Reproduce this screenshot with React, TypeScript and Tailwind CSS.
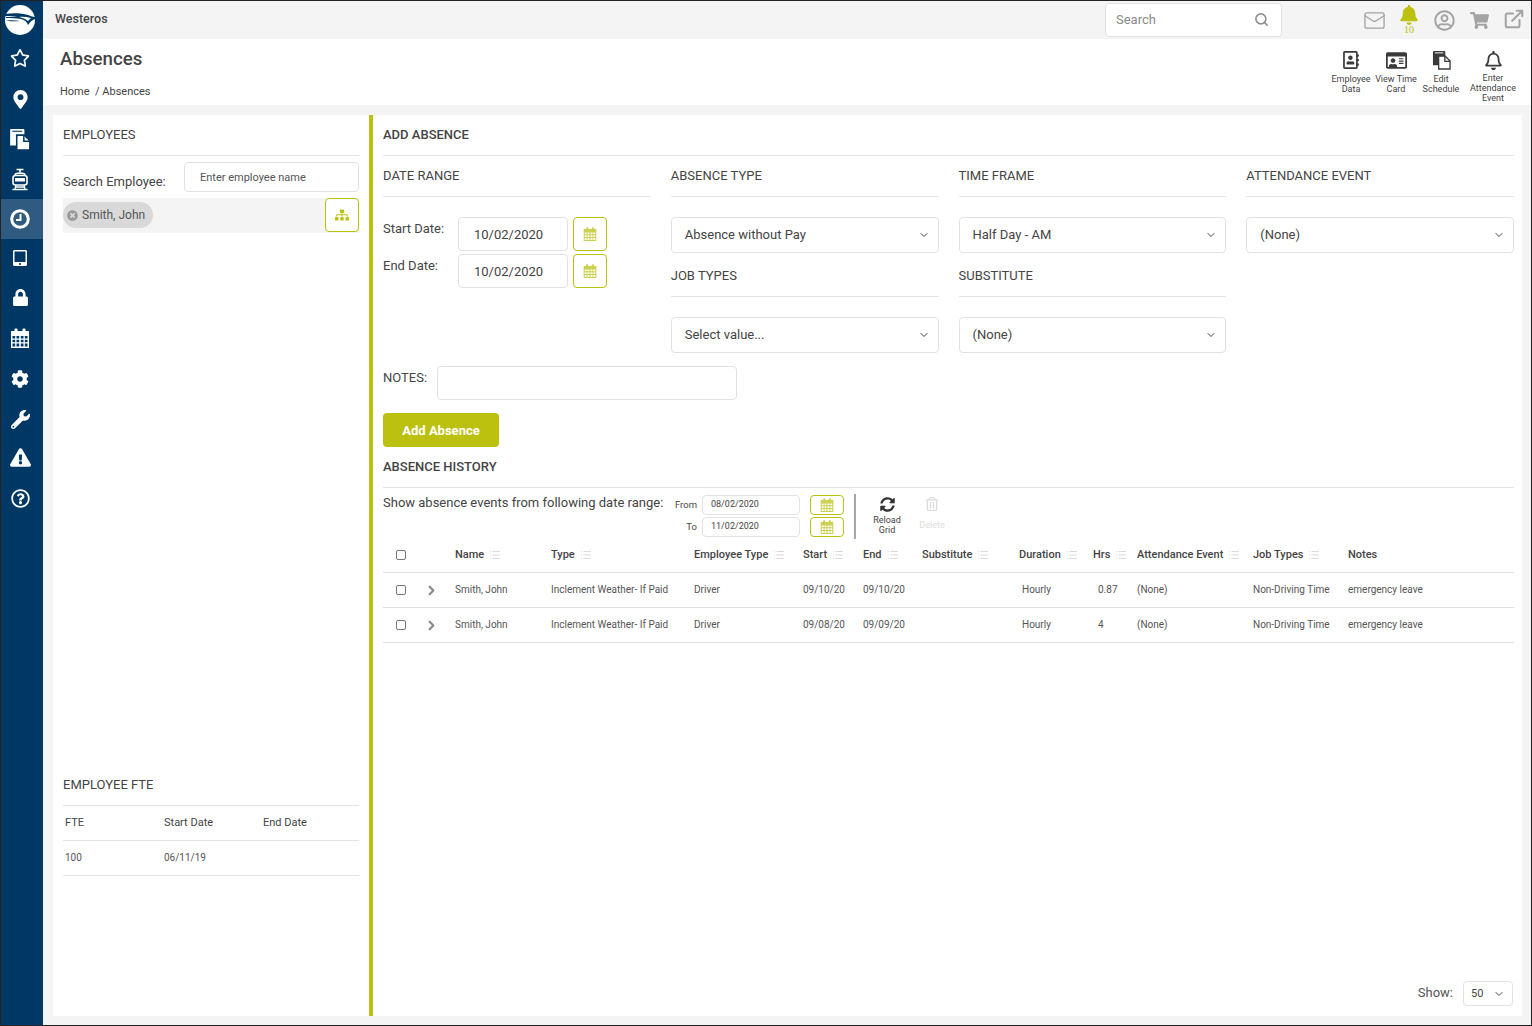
import { ChevronDown, ChevronRight, ExternalLink, List, Mail, Search } from 'lucide-react';
import {
  FaBell,
  FaCog,
  FaExclamationTriangle,
  FaLock,
  FaMapMarkerAlt,
  FaRegAddressBook,
  FaRegBell,
  FaRegIdCard,
  FaRegQuestionCircle,
  FaRegStar,
  FaRegTrashAlt,
  FaRegUserCircle,
  FaShoppingCart,
  FaSitemap,
  FaSyncAlt,
  FaTabletAlt,
  FaTimesCircle,
  FaWrench,
} from 'react-icons/fa';

function Logo() {
  return (
    <svg width="30" height="30" viewBox="0 0 30 30">
      <circle cx="15" cy="15" r="15" fill="#fff" />
      <path d="M0 9 C8 8 16 8 23 10 C26 11 28 12 30 12 L30 14 C27 15 25 17 23 20 C22 17 20 15 16 14 C11 13 6 13 1 13 L1 12 C6 12 9 12 12 12 C8 11 4 11 0 11 Z" fill="#003865" />
      <path d="M1 15.5 C6 15 11 15 15 16 C11 16.5 6 16.5 1 15.5 Z" fill="#003865" />
      <path d="M14 12 C18 13 21 14 23 16 L26 13 C22 12 18 11.5 14 12 Z" fill="#fff" />
    </svg>
  );
}

function TrainIcon() {
  return (
    <svg width="18" height="23" viewBox="0 0 18 23" fill="none" stroke="#fff">
      <path d="M5.5 1.5 H12.5 M9 1.5 V4" strokeWidth="1.6" />
      <path d="M4 7 C4 4.5 14 4.5 14 7" strokeWidth="1.6" />
      <rect x="2" y="7.5" width="14" height="9.5" rx="2.5" strokeWidth="1.6" />
      <rect x="4" y="10" width="10" height="3.5" fill="#fff" stroke="none" />
      <path d="M5 17 L4 21 M13 17 L14 21 M1.5 21.5 H16.5 M5 19 H13" strokeWidth="1.3" />
    </svg>
  );
}

function ClockIcon() {
  return (
    <svg width="20" height="20" viewBox="0 0 20 20" fill="none" stroke="#fff">
      <circle cx="10" cy="10" r="8.3" strokeWidth="3" />
      <path d="M10.5 5 V11 H6" strokeWidth="2" />
    </svg>
  );
}

function FilesIcon({ size, dark }: { size: number; dark?: boolean }) {
  return (
    <svg width={size} height={size + 1} viewBox="0 0 20 21">
      <path
        d="M1 2 C1 1.4 1.4 1 2 1 H13 C13.6 1 14 1.4 14 2 V16 H1 Z"
        fill="currentColor"
      />
      <path d="M3 3 H12" stroke={dark ? '#fff' : '#003865'} strokeWidth="1" />
      <path
        d="M7 6.5 H14 L19 11.5 V20 H7 Z"
        fill={dark ? '#fff' : 'currentColor'}
        stroke={dark ? 'currentColor' : '#003865'}
        strokeWidth="1.4"
      />
      <path
        d="M13.5 6.5 V12 H19"
        fill="none"
        stroke={dark ? 'currentColor' : '#003865'}
        strokeWidth="1.4"
      />
    </svg>
  );
}

// font awesome 4 style calendar, the grid is part of the look
function CalendarIcon({ size, className }: { size: number; className?: string }) {
  return (
    <svg width={size} height={size} viewBox="0 0 20 20" className={className} fill="currentColor">
      <rect x="4.5" y="0.5" width="3" height="4" rx="1" />
      <rect x="12.5" y="0.5" width="3" height="4" rx="1" />
      <path
        fillRule="evenodd"
        d="M1 3 H19 V20 H1 Z M2.5 8 V10.5 H5.2 V8 Z M6.5 8 V10.5 H9.2 V8 Z M10.8 8 V10.5 H13.5 V8 Z M14.8 8 V10.5 H17.5 V8 Z M2.5 11.8 V14.3 H5.2 V11.8 Z M6.5 11.8 V14.3 H9.2 V11.8 Z M10.8 11.8 V14.3 H13.5 V11.8 Z M14.8 11.8 V14.3 H17.5 V11.8 Z M2.5 15.6 V18.5 H5.2 V15.6 Z M6.5 15.6 V18.5 H9.2 V15.6 Z M10.8 15.6 V18.5 H13.5 V15.6 Z M14.8 15.6 V18.5 H17.5 V15.6 Z"
      />
    </svg>
  );
}

const navItems = [
  { icon: <FaRegStar size={20} />, nudge: 'pb-[2px]' },
  { icon: <FaMapMarkerAlt size={19} /> },
  { icon: <FilesIcon size={22} /> },
  { icon: <TrainIcon /> },
  { icon: <ClockIcon />, active: true },
  { icon: <FaTabletAlt size={16} />, nudge: 'pb-[2px]' },
  { icon: <FaLock size={17} />, nudge: 'pb-[3px]' },
  { icon: <CalendarIcon size={20} />, nudge: 'pb-[2px]' },
  { icon: <FaCog size={18} /> },
  { icon: <FaWrench size={19} /> },
  { icon: <FaExclamationTriangle size={21} />, nudge: 'pb-[3px]' },
  { icon: <FaRegQuestionCircle size={19} />, nudge: 'pb-[2px]' },
];

function Sidebar() {
  return (
    <aside className="w-[42px] shrink-0 bg-[#003865] text-white">
      <div className="h-[38px] flex items-center justify-center pr-[4px]">
        <Logo />
      </div>
      {navItems.map((item, i) => (
        <div
          key={i}
          className={`h-10 flex items-center justify-center pr-[4px] ${item.nudge ?? ''} ${item.active ? 'bg-[#2f5b80]' : ''}`}
        >
          {item.icon}
        </div>
      ))}
    </aside>
  );
}

function TopBar() {
  return (
    <div className="h-[38px] shrink-0 bg-[#f4f4f4] flex items-center pl-3 pr-[6px]">
      <span className="text-[12.5px] font-medium text-[#444] -mt-[2px]">Westeros</span>
      <div className="ml-auto w-[177px] h-[34px] bg-white border border-[#e2e2e2] rounded flex items-center justify-between pl-[10px] pr-[12px]">
        <span className="text-[13px] text-[#8a8a8a]">Search</span>
        <Search size={15} className="text-[#8f8f8f] -mt-[2px]" strokeWidth={2.6} />
      </div>
      <div className="ml-[81px] flex items-center text-[#a3a3a3]">
        <Mail size={23} strokeWidth={1.4} />
        <div className="w-[20px] ml-[13px] flex flex-col items-center text-[#bcc10f] -mt-[2px]">
          <FaBell size={20} />
          <span className="font-['Liberation_Serif',serif] text-[10px] leading-[9px]">10</span>
        </div>
        <FaRegUserCircle size={21} className="ml-[15px]" />
        <FaShoppingCart size={19} className="ml-[15px]" />
        <ExternalLink size={22} strokeWidth={2.2} className="ml-[14px] -mt-[3px]" />
      </div>
    </div>
  );
}

function HeaderAction({
  icon,
  label,
  width,
  labelClass,
}: {
  icon: React.ReactNode;
  label: string;
  width: string;
  labelClass: string;
}) {
  return (
    <div className={`flex flex-col items-center ${width}`}>
      <div className="h-[24px] flex items-center text-[#3a3a3a]">{icon}</div>
      <span className={`text-[9px] leading-[10px] text-center text-[#444] ${labelClass}`}>{label}</span>
    </div>
  );
}

function PageHeader() {
  return (
    <div className="h-[66px] shrink-0 bg-white flex pl-[17px] pr-[9px]">
      <div>
        <h1 className="text-[18.7px] leading-[24px] mt-[8px] font-medium text-[#444]">Absences</h1>
        <p className="text-[11px] leading-[14px] mt-[14px] text-[#444]">Home&nbsp;&nbsp;/&nbsp;Absences</p>
      </div>
      <div className="ml-auto flex gap-[1px] pt-[9px]">
        <HeaderAction icon={<FaRegAddressBook size={18} />} label="Employee Data" width="w-[44px]" labelClass="mt-[2px]" />
        <HeaderAction icon={<FaRegIdCard size={21} />} label="View Time Card" width="w-[44px]" labelClass="mt-[2px]" />
        <HeaderAction icon={<FilesIcon size={19} dark />} label="Edit Schedule" width="w-[44px]" labelClass="mt-[2px]" />
        <HeaderAction icon={<FaRegBell size={19} />} label="Enter Attendance Event" width="w-[58px]" labelClass="mt-[1px]" />
      </div>
    </div>
  );
}

function SectionHeading({ children, bold }: { children: React.ReactNode; bold?: boolean }) {
  return (
    <div className="h-[41px] border-b border-[#e4e4e4] flex items-center pb-[1px]">
      <h2 className={`text-[13px] text-[#444] ${bold ? 'font-medium' : ''}`}>{children}</h2>
    </div>
  );
}

function CalendarButton({ small }: { small?: boolean }) {
  return (
    <div
      className={`border border-[#bcc10f] rounded flex items-center justify-center text-[#cdd152] ${
        small ? 'w-[34px] h-[20px]' : 'w-[34px] h-[34px]'
      }`}
    >
      <CalendarIcon size={14} />
    </div>
  );
}

function DateField({ label, value }: { label: string; value: string }) {
  return (
    <div className="flex h-[34px]">
      <span className="w-[75px] text-[13px] text-[#444] pt-[2px]">{label}</span>
      <div className="w-[110px] border border-[#e2e2e2] rounded flex items-center pl-[15px] pt-[1px] text-[13px] text-[#444]">
        {value}
      </div>
      <div className="ml-[5px]">
        <CalendarButton />
      </div>
    </div>
  );
}

function Select({ value }: { value: string }) {
  return (
    <div className="h-[36px] border border-[#e2e2e2] rounded flex items-center justify-between pl-[13px] pr-[8px] text-[13px] text-[#444]">
      <span>{value}</span>
      <ChevronDown size={12} strokeWidth={2} />
    </div>
  );
}

function RangeRow({ label, value }: { label: string; value: string }) {
  return (
    <div className="flex items-center h-[20px]">
      <span className="w-[34px] text-right text-[9.5px] text-[#444]">{label}</span>
      <div className="ml-[5px] w-[98px] h-[20px] border border-[#e2e2e2] rounded flex items-center pl-2 text-[9px] text-[#444]">
        {value}
      </div>
      <div className="ml-[10px]">
        <CalendarButton small />
      </div>
    </div>
  );
}

const gridCols =
  'grid grid-cols-[44px_28px_96px_143px_109px_60px_59px_97px_74px_44px_116px_95px_1fr]';

const headers = [
  { label: 'Name' },
  { label: 'Type' },
  { label: 'Employee Type' },
  { label: 'Start' },
  { label: 'End' },
  { label: 'Substitute' },
  { label: 'Duration' },
  { label: 'Hrs' },
  { label: 'Attendance Event' },
  { label: 'Job Types' },
  { label: 'Notes', plain: true },
];

const rows = [
  {
    id: 1,
    start: '09/10/20',
    end: '09/10/20',
    hrs: '0.87',
  },
  {
    id: 2,
    start: '09/08/20',
    end: '09/09/20',
    hrs: '4',
  },
];

function CheckBox() {
  return <div className="ml-[13px] w-[10px] h-[10px] border border-[#777] rounded-[2px] bg-white" />;
}

function HistoryTable() {
  return (
    <div className="text-[#444]">
      <div className={`${gridCols} h-[36px] items-center border-b border-[#e0e0e0] pt-[1px]`}>
        <CheckBox />
        <div />
        {headers.map((h) => (
          <div key={h.label} className="flex items-center text-[11px] font-medium whitespace-nowrap">
            {h.label}
            {!h.plain && <List size={12} strokeWidth={1.4} className="ml-[5px] text-[#c8c8c8]" />}
          </div>
        ))}
      </div>
      {rows.map((row) => (
        <div
          key={row.id}
          className={`${gridCols} h-[35px] items-center border-b border-[#e0e0e0] text-[10px] text-[#555] whitespace-nowrap`}
        >
          <CheckBox />
          <ChevronRight size={15} strokeWidth={3.5} className="text-[#8a8a8a] -ml-[3px]" />
          <div className="-mt-[1px]">Smith, John</div>
          <div className="-mt-[1px]">Inclement Weather- If Paid</div>
          <div className="-mt-[1px]">Driver</div>
          <div className="-mt-[1px]">{row.start}</div>
          <div className="-mt-[1px]">{row.end}</div>
          <div />
          <div className="pl-[3px] -mt-[1px]">Hourly</div>
          <div className="pl-[5px] -mt-[1px]">{row.hrs}</div>
          <div className="-mt-[1px]">(None)</div>
          <div className="-mt-[1px]">Non-Driving Time</div>
          <div className="-mt-[1px]">emergency leave</div>
        </div>
      ))}
    </div>
  );
}

function EmployeesPanel() {
  return (
    <section className="w-[316px] shrink-0 bg-white px-[10px]">
      <SectionHeading>EMPLOYEES</SectionHeading>
      <div className="flex mt-[6px] h-[30px]">
        <span className="w-[121px] text-[13px] text-[#444] pt-[10px]">Search Employee:</span>
        <div className="flex-1 border border-[#e2e2e2] rounded flex items-center pl-[15px] pt-[2px] text-[11px] text-[#555]">
          Enter employee name
        </div>
      </div>
      <div className="mt-[6px] h-[35px] bg-[#f4f4f4] flex items-start">
        <div className="mt-[4px] h-[26px] w-[90px] bg-[#d9d9d9] rounded-full flex items-center pl-[4px] gap-[4px] text-[12px] text-[#555]">
          <FaTimesCircle size={11} className="text-[#999]" />
          Smith, John
        </div>
        <div className="ml-auto w-[34px] h-[34px] bg-white border border-[#bcc10f] rounded flex items-center justify-center text-[#bcc10f]">
          <FaSitemap size={14} />
        </div>
      </div>

      <div className="mt-[532px]">
        <SectionHeading>EMPLOYEE FTE</SectionHeading>
        <div className="grid grid-cols-[99px_99px_1fr] pl-[2px] h-[35px] items-center border-b border-[#e4e4e4] text-[11px] text-[#444]">
          <span>FTE</span>
          <span>Start Date</span>
          <span>End Date</span>
        </div>
        <div className="grid grid-cols-[99px_99px_1fr] pl-[2px] pb-[1px] h-[35px] items-center border-b border-[#e4e4e4] text-[10px] text-[#555]">
          <span>100</span>
          <span>06/11/19</span>
          <span />
        </div>
      </div>
    </section>
  );
}

function AbsencePanel() {
  return (
    <section className="flex-1 bg-white border-l-4 border-[#bcc10f] pl-[10px] pr-2 flex flex-col">
      <SectionHeading bold>ADD ABSENCE</SectionHeading>

      <div className="grid grid-cols-4 gap-x-5">
        <div>
          <SectionHeading>DATE RANGE</SectionHeading>
          <div className="mt-5 flex flex-col gap-[3px]">
            <DateField label="Start Date:" value="10/02/2020" />
            <DateField label="End Date:" value="10/02/2020" />
          </div>
        </div>
        <div>
          <SectionHeading>ABSENCE TYPE</SectionHeading>
          <div className="mt-5 mb-[3px]">
            <Select value="Absence without Pay" />
          </div>
          <SectionHeading>JOB TYPES</SectionHeading>
          <div className="mt-5">
            <Select value="Select value..." />
          </div>
        </div>
        <div>
          <SectionHeading>TIME FRAME</SectionHeading>
          <div className="mt-5 mb-[3px]">
            <Select value="Half Day - AM" />
          </div>
          <SectionHeading>SUBSTITUTE</SectionHeading>
          <div className="mt-5">
            <Select value="(None)" />
          </div>
        </div>
        <div>
          <SectionHeading>ATTENDANCE EVENT</SectionHeading>
          <div className="mt-5">
            <Select value="(None)" />
          </div>
        </div>
      </div>

      <div className="flex mt-[13px]">
        <span className="w-[54px] text-[13px] text-[#444] pt-[2px]">NOTES:</span>
        <div className="w-[300px] h-[34px] border border-[#e2e2e2] rounded" />
      </div>

      <button className="mt-[13px] w-[116px] h-[34px] bg-[#bcc10f] rounded text-white text-[13px] font-bold pt-[1px]">
        Add Absence
      </button>

      <SectionHeading bold>ABSENCE HISTORY</SectionHeading>

      <div className="flex h-[49px] pt-[6px]">
        <span className="w-[280px] text-[13px] text-[#444] leading-[18px] whitespace-nowrap">
          Show absence events from following date range:
        </span>
        <div className="flex flex-col gap-[2px] pt-[1px]">
          <RangeRow label="From" value="08/02/2020" />
          <RangeRow label="To" value="11/02/2020" />
        </div>
        <div className="ml-[10px] w-[2px] h-[45px] bg-[#a8a8a8]" />
        <div className="ml-[16px] w-[30px] flex flex-col items-center text-[#444]">
          <FaSyncAlt size={15} className="mt-[3px] text-[#333]" />
          <span className="mt-[3px] text-[9px] leading-[10px] text-center">Reload Grid</span>
        </div>
        <div className="ml-[16px] w-[28px] flex flex-col items-center text-[#dcdcdc]">
          <FaRegTrashAlt size={14} className="mt-[3px]" />
          <span className="mt-[9px] text-[9px] leading-[10px]">Delete</span>
        </div>
      </div>

      <HistoryTable />

      <div className="mt-auto mb-[10px] flex items-center justify-end pr-[1px]">
        <span className="text-[13px] text-[#555] -mt-[2px] mr-[1px]">Show:</span>
        <div className="ml-[9px] w-[50px] h-[25px] border border-[#e2e2e2] rounded flex items-center justify-between pl-[7px] pr-[7px] pt-[1px] text-[11px] text-[#444]">
          50
          <ChevronDown size={12} strokeWidth={2} />
        </div>
      </div>
    </section>
  );
}

export default function App() {
  return (
    <div className="w-[1532px] h-[1026px] flex bg-[#f4f4f4] border-t border-l border-b border-r border-[#222] font-['Roboto',sans-serif] overflow-hidden">
      <Sidebar />
      <main className="flex-1 flex flex-col min-w-0">
        <TopBar />
        <PageHeader />
        <div className="flex-1 flex pt-[10px] pb-[9px] pl-[10px] pr-[9px] min-h-0">
          <EmployeesPanel />
          <AbsencePanel />
        </div>
      </main>
    </div>
  );
}
